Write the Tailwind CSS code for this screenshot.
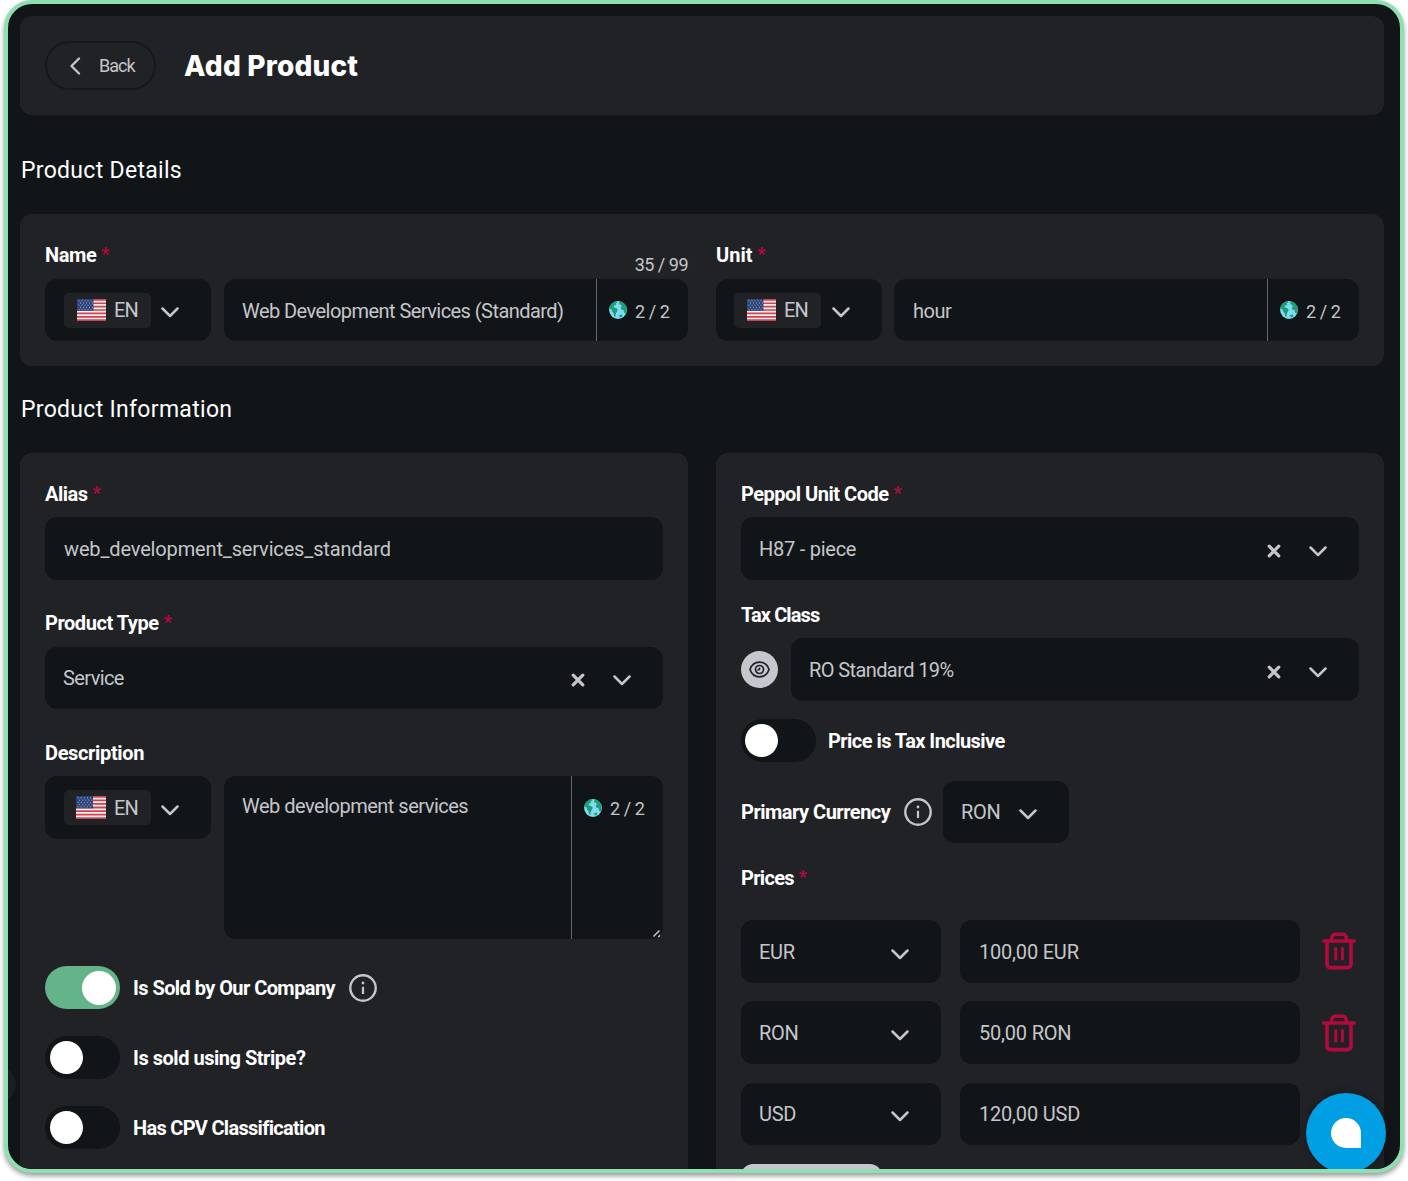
<!DOCTYPE html>
<html lang="en">
<head>
    <meta charset="UTF-8">
    <meta name="viewport" content="width=device-width, initial-scale=1.0">
    <title>Add Product</title>
    <script src="https://cdn.jsdelivr.net/npm/@tailwindcss/browser@4"></script>
</head>
<body class="h-screen bg-white overflow-hidden font-['Roboto',sans-serif] text-[20px] leading-none text-[#c5c6cb] whitespace-nowrap">
    <!-- Shared icons -->
    <svg class="hidden">
        <symbol id="chevron" viewBox="0 0 18 11"><path d="M1.5 1.5L9 9L16.5 1.5" fill="none" stroke="currentColor" stroke-width="2.5" stroke-linecap="round" stroke-linejoin="round"/></symbol>
        <symbol id="clear" viewBox="0 0 14 14"><path d="M2.2 2.2L11.8 11.8M11.8 2.2L2.2 11.8" fill="none" stroke="currentColor" stroke-width="3.2" stroke-linecap="round"/></symbol>
        <symbol id="info" viewBox="0 0 28 28">
            <circle cx="14" cy="14" r="12.7" fill="none" stroke="currentColor" stroke-width="2.4"/>
            <circle cx="14" cy="9" r="1.4" fill="currentColor"/>
            <path d="M14 12.8V20" stroke="currentColor" stroke-width="2.2"/>
        </symbol>
        <symbol id="flag" viewBox="0 0 29 22" preserveAspectRatio="none">
            <rect width="29" height="22" fill="#f4f1f1"/>
            <path d="M0 .85H29M0 4.23H29M0 7.6H29M0 11H29M0 14.4H29M0 17.8H29M0 21.15H29" stroke="#cf4350" stroke-width="1.7"/>
            <rect width="16.5" height="11.8" fill="#2f4579"/>
            <path d="M1.5 1.8H16M3 4H16M1.5 6.2H16M3 8.4H16M1.5 10.4H16" stroke="#a9b6d3" stroke-width=".9" stroke-dasharray="1 2"/>
        </symbol>
        <symbol id="globe" viewBox="0 0 18 18">
            <circle cx="9" cy="9" r="8.9" fill="#7fdcf0"/>
            <path d="M.3 7.500C.8 4 3.500 1 7 .3L8.600 1.300L6.500 2.400L7.300 4L5 4.500L4.600 6.200L7 7L8.800 8.600L8 10.500L6.800 12.500L6.500 15.500L5.200 15.400L4.600 12.200L3 10.300L2.600 8.400Z" fill="#1f9c78"/>
            <path d="M9.800.2C13 .5 16 2.500 17.300 5.600L17.800 10L16.300 12.500L14.800 11.200L14.600 9L12.200 8.600L11.600 6.800L13 5.200L11.500 3.600L9.600 3.300L10.600 1.800Z" fill="#1f9c78"/>
            <path d="M9.500 14.500L12.600 13.600L13.600 15.200L11.500 16.600Z" fill="#1f9c78"/>
        </symbol>
        <symbol id="trash" viewBox="0 0 34 38">
            <g fill="none" stroke="currentColor" stroke-width="3.6" stroke-linejoin="round">
                <path d="M1.8 9H32.2" stroke-linecap="round"/>
                <path d="M9.5 8C9.5 4.5 11 2.2 13.5 2.2H20.5C23 2.2 24.5 4.5 24.5 8"/>
                <path d="M5 9V32C5 34.5 6.5 35.6 8.500 35.6H25.5C27.5 35.6 29 34.5 29 32V9"/>
            </g>
            <path d="M13.8 16.500V27M20.4 16.500V27" stroke="currentColor" stroke-width="3" stroke-linecap="round"/>
        </symbol>
    </svg>

    <div class="relative mx-1 h-[1173px] overflow-hidden rounded-[28px] border-4 border-[#8edfb1] bg-[#111517] pt-3 pr-4 pl-3 shadow-[0_3px_5px_rgba(0,0,0,0.4)]">
        <!-- Header -->
        <header class="flex h-[99px] items-center rounded-[12px] bg-[#212226] pl-[25px]">
            <div class="flex h-[49px] w-[111px] items-center rounded-full border-2 border-[#16191b] pl-[22px]">
                <svg class="h-[18px] w-[12px]" viewBox="0 0 12 18"><path d="M10 1.5L2.5 9L10 16.5" fill="none" stroke="currentColor" stroke-width="2.3" stroke-linecap="round" stroke-linejoin="round"/></svg>
                <span class="ml-[18px] text-[18px] tracking-[-1px]">Back</span>
            </div>
            <h1 class="mt-px ml-[28px] font-['Inter',sans-serif] text-[28px] font-extrabold tracking-[0.2px] text-white">Add Product</h1>
        </header>

        <h2 class="mt-[43px] flex h-6 items-center pl-px text-[23px] tracking-[0.3px] text-white">Product Details</h2>

        <section class="mt-[32px] flex h-[152px] gap-[28px] rounded-[12px] bg-[#212226] px-[25px] pt-[29px]">
            <div class="w-[643px]">
                <div class="flex h-[36px] justify-between">
                    <label class="flex h-6 items-center font-bold tracking-[-0.4px] text-white">Name<span class="-mt-[3px] ml-[5px] text-[18px] text-[#b3093f]">*</span></label>
                    <span class="mt-[13px] text-[18px] tracking-[-0.5px]">35 / 99</span>
                </div>
                <div class="flex h-[62px] gap-[13px]">
                    <div class="flex w-[166px] items-center rounded-[12px] bg-[#111517] pl-[19px]">
                        <div class="flex h-[35px] w-[87px] items-center rounded-[5px] bg-[#212226] pl-[13px]">
                            <svg class="h-[22px] w-[29px]"><use href="#flag"/></svg><span class="ml-2 tracking-[-0.8px]">EN</span>
                        </div>
                        <svg class="mt-[5px] ml-[10px] h-[11px] w-[18px]"><use href="#chevron"/></svg>
                    </div>
                    <div class="flex flex-1 rounded-[12px] bg-[#111517]">
                        <span class="flex w-[373px] items-center border-r border-[#66696b] pt-[2px] pl-[18px] tracking-[-0.55px]">Web Development Services (Standard)</span>
                        <span class="flex items-center pl-[12px] text-[18px]"><svg class="h-[18px] w-[18px]"><use href="#globe"/></svg><span class="mt-[3px] ml-[8px] tracking-[-0.4px]">2 / 2</span></span>
                    </div>
                </div>
            </div>
            <div class="w-[643px]">
                <div class="h-[36px]">
                    <label class="flex h-6 items-center font-bold text-white">Unit<span class="-mt-[3px] ml-[5px] text-[18px] text-[#b3093f]">*</span></label>
                </div>
                <div class="flex h-[62px] gap-[12px]">
                    <div class="flex w-[166px] items-center rounded-[12px] bg-[#111517] pl-[18px]">
                        <div class="flex h-[35px] w-[87px] items-center rounded-[5px] bg-[#212226] pl-[13px]">
                            <svg class="h-[22px] w-[29px]"><use href="#flag"/></svg><span class="ml-2 tracking-[-0.8px]">EN</span>
                        </div>
                        <svg class="mt-[5px] ml-[11px] h-[11px] w-[18px]"><use href="#chevron"/></svg>
                    </div>
                    <div class="flex flex-1 rounded-[12px] bg-[#111517]">
                        <span class="flex w-[374px] items-center border-r border-[#66696b] pt-[2px] pl-[19px] tracking-[-0.5px]">hour</span>
                        <span class="flex items-center pl-[12px] text-[18px]"><svg class="h-[18px] w-[18px]"><use href="#globe"/></svg><span class="mt-[3px] ml-[8px] tracking-[-0.4px]">2 / 2</span></span>
                    </div>
                </div>
            </div>
        </section>

        <h2 class="mt-[31px] flex h-6 items-center pl-px text-[23px] tracking-[0.3px] text-white">Product Information</h2>

        <div class="mt-[32px] flex gap-[28px]">
            <!-- General -->
            <section class="h-[740px] w-[668px] rounded-[12px] bg-[#212226] px-[25px] pt-[29px]">
                <label class="flex h-6 items-center font-bold tracking-[-0.5px] text-white">Alias<span class="-mt-[3px] ml-[5px] text-[18px] text-[#b3093f]">*</span></label>
                <div class="mt-[11px] flex h-[63px] items-center rounded-[12px] bg-[#111517] px-[19px] tracking-[-0.15px]">web_development_services_standard</div>

                <label class="mt-[31px] flex h-6 items-center font-bold tracking-[-0.45px] text-white">Product Type<span class="-mt-[3px] ml-[5px] text-[18px] text-[#b3093f]">*</span></label>
                <div class="mt-[12px] flex h-[62px] items-center rounded-[12px] bg-[#111517] pr-[32px] pl-[18px]">
                    <span class="tracking-[-0.6px]">Service</span>
                    <svg class="mt-1 ml-auto h-[14px] w-[14px]"><use href="#clear"/></svg>
                    <svg class="mt-[5px] ml-[28px] h-[11px] w-[18px]"><use href="#chevron"/></svg>
                </div>

                <label class="mt-[32px] flex h-6 items-center font-bold tracking-[-0.35px] text-white">Description</label>
                <div class="mt-[11px] flex h-[163px] items-start gap-[13px]">
                    <div class="flex h-[63px] w-[166px] items-center rounded-[12px] bg-[#111517] pl-[19px]">
                        <div class="flex h-[35px] w-[87px] items-center rounded-[5px] bg-[#212226] pl-[12px]">
                            <svg class="h-[23px] w-[30px]"><use href="#flag"/></svg><span class="ml-2 tracking-[-0.8px]">EN</span>
                        </div>
                        <svg class="mt-[5px] ml-[10px] h-[11px] w-[18px]"><use href="#chevron"/></svg>
                    </div>
                    <div class="relative flex h-full flex-1 rounded-[12px] bg-[#111517]">
                        <span class="w-[348px] border-r border-[#66696b] pt-[20px] pl-[18px] tracking-[-0.5px]">Web development services</span>
                        <span class="flex h-[63px] items-center pl-[12px] text-[18px]"><svg class="h-[18px] w-[18px]"><use href="#globe"/></svg><span class="mt-[2px] ml-[8px] tracking-[-0.4px]">2 / 2</span></span>
                        <svg class="absolute right-[2px] bottom-[1px] h-[9px] w-[9px]" viewBox="0 0 9 9"><path d="M1.5 7.5L7.5 1.5M6.3 8L8 6.3" stroke="#c5c6cb" stroke-width="1.5"/></svg>
                    </div>
                </div>

                <div class="mt-[27px] flex h-[43px] items-center font-bold text-white">
                    <div class="flex h-[43px] w-[75px] items-center justify-end rounded-full bg-[#65b388] pr-[4px]"><span class="size-[34px] rounded-full bg-white"></span></div>
                    <span class="ml-[13px] w-[203px] tracking-[-0.57px]">Is Sold by Our Company</span>
                    <svg class="ml-[13px] h-[28px] w-[28px] text-[#c5c6cb]"><use href="#info"/></svg>
                </div>
                <div class="mt-[27px] flex h-[43px] items-center font-bold text-white">
                    <div class="flex h-[43px] w-[75px] items-center rounded-full bg-[#111517] pl-[5px]"><span class="size-[33px] rounded-full bg-white"></span></div>
                    <span class="ml-[13px] tracking-[-0.47px]">Is sold using Stripe?</span>
                </div>
                <div class="mt-[27px] flex h-[43px] items-center font-bold text-white">
                    <div class="flex h-[43px] w-[75px] items-center rounded-full bg-[#111517] pl-[5px]"><span class="size-[33px] rounded-full bg-white"></span></div>
                    <span class="ml-[13px] tracking-[-0.7px]">Has CPV Classification</span>
                </div>
            </section>

            <!-- Pricing -->
            <section class="h-[740px] w-[668px] rounded-[12px] bg-[#212226] px-[25px] pt-[29px]">
                <label class="flex h-6 items-center font-bold tracking-[-0.5px] text-white">Peppol Unit Code<span class="-mt-[3px] ml-[5px] text-[18px] text-[#b3093f]">*</span></label>
                <div class="mt-[11px] flex h-[63px] items-center rounded-[12px] bg-[#111517] pr-[32px] pl-[18px]">
                    <span class="tracking-[-0.25px]">H87 - piece</span>
                    <svg class="mt-1 ml-auto h-[14px] w-[14px]"><use href="#clear"/></svg>
                    <svg class="mt-[5px] ml-[28px] h-[11px] w-[18px]"><use href="#chevron"/></svg>
                </div>

                <label class="mt-[23px] flex h-6 items-center font-bold tracking-[-0.9px] text-white">Tax Class</label>
                <div class="mt-[11px] flex h-[63px] items-center gap-[13px]">
                    <div class="flex size-[37px] items-center justify-center rounded-full bg-[#c5c6ce] text-[#212226]">
                        <svg class="h-[17px] w-[21px]" viewBox="0 0 21 17" fill="none" stroke="currentColor" stroke-width="1.7"><path d="M1 8.5C2.5 4 6.2 1.2 10.5 1.2S18.500 4 20 8.500C18.500 13 14.800 15.800 10.500 15.800S2.500 13 1 8.500Z"/><circle cx="10.500" cy="8.500" r="4"/><path d="M8.500 8.800C10 9 10.800 8.200 10.500 6.600"/></svg>
                    </div>
                    <div class="flex h-full flex-1 items-center rounded-[12px] bg-[#111517] pr-[32px] pl-[18px]">
                        <span class="tracking-[-0.6px]">RO Standard 19%</span>
                        <svg class="mt-1 ml-auto h-[14px] w-[14px]"><use href="#clear"/></svg>
                        <svg class="mt-[5px] ml-[28px] h-[11px] w-[18px]"><use href="#chevron"/></svg>
                    </div>
                </div>

                <div class="mt-[18px] flex h-[43px] items-center font-bold text-white">
                    <div class="flex h-[43px] w-[75px] items-center rounded-full bg-[#111517] pl-[4px]"><span class="size-[33px] rounded-full bg-white"></span></div>
                    <span class="ml-[12px] tracking-[-0.55px]">Price is Tax Inclusive</span>
                </div>

                <div class="mt-[19px] flex h-[62px] items-center">
                    <span class="w-[163px] font-bold tracking-[-0.5px] text-white">Primary Currency</span>
                    <svg class="h-[28px] w-[28px]"><use href="#info"/></svg>
                    <div class="ml-[11px] flex h-full w-[126px] items-center justify-between rounded-[12px] bg-[#111517] pr-[32px] pl-[18px]">
                        <span class="tracking-[-0.3px]">RON</span>
                        <svg class="mt-1 h-[11px] w-[18px]"><use href="#chevron"/></svg>
                    </div>
                </div>

                <label class="mt-[23px] flex h-6 items-center font-bold tracking-[-0.7px] text-white">Prices<span class="-mt-[3px] ml-[5px] text-[18px] text-[#b3093f]">*</span></label>
                <div class="mt-[30px] flex flex-col">
                    <div class="flex h-[63px] items-center">
                        <div class="flex h-full w-[200px] items-center justify-between rounded-[12px] bg-[#111517] pr-[32px] pl-[18px]"><span class="tracking-[-0.3px]">EUR</span><svg class="mt-[5px] h-[11px] w-[18px]"><use href="#chevron"/></svg></div>
                        <div class="ml-[19px] flex h-full w-[340px] items-center rounded-[12px] bg-[#111517] pl-[19px]"><span class="tracking-[-0.2px]">100,00 EUR</span></div>
                        <svg class="-mt-px ml-[22px] h-[38px] w-[34px] text-[#b3093f]"><use href="#trash"/></svg>
                    </div>
                    <div class="mt-[18px] flex h-[63px] items-center">
                        <div class="flex h-full w-[200px] items-center justify-between rounded-[12px] bg-[#111517] pr-[32px] pl-[18px]"><span class="tracking-[-0.3px]">RON</span><svg class="mt-[5px] h-[11px] w-[18px]"><use href="#chevron"/></svg></div>
                        <div class="ml-[19px] flex h-full w-[340px] items-center rounded-[12px] bg-[#111517] pl-[19px]"><span class="tracking-[-0.2px]">50,00 RON</span></div>
                        <svg class="mt-px ml-[22px] h-[38px] w-[34px] text-[#b3093f]"><use href="#trash"/></svg>
                    </div>
                    <div class="mt-[19px] flex h-[62px] items-center">
                        <div class="flex h-full w-[200px] items-center justify-between rounded-[12px] bg-[#111517] pr-[32px] pl-[18px]"><span class="tracking-[-0.3px]">USD</span><svg class="mt-[5px] h-[11px] w-[18px]"><use href="#chevron"/></svg></div>
                        <div class="ml-[19px] flex h-full w-[340px] items-center rounded-[12px] bg-[#111517] pl-[19px]"><span class="tracking-[-0.2px]">120,00 USD</span></div>
                    </div>
                    <div class="mt-[19px] h-[48px] w-[141px] rounded-[12px] bg-[#c5c6ce]"></div>
                </div>
            </section>
        </div>

        <!-- Drawer handle and chat launcher -->
        <div class="absolute top-[1062px] -left-[29px] size-[37px] rounded-full bg-[#1b1d20]"></div>
        <div class="absolute top-[1089px] right-[14px] flex size-[80px] items-center justify-center rounded-full bg-[#009ee3] shadow-[0_0_8px_rgba(0,0,0,0.3)]">
            <span class="size-[30px] rounded-full rounded-br-none bg-white"></span>
        </div>
    </div>
</body>
</html>
